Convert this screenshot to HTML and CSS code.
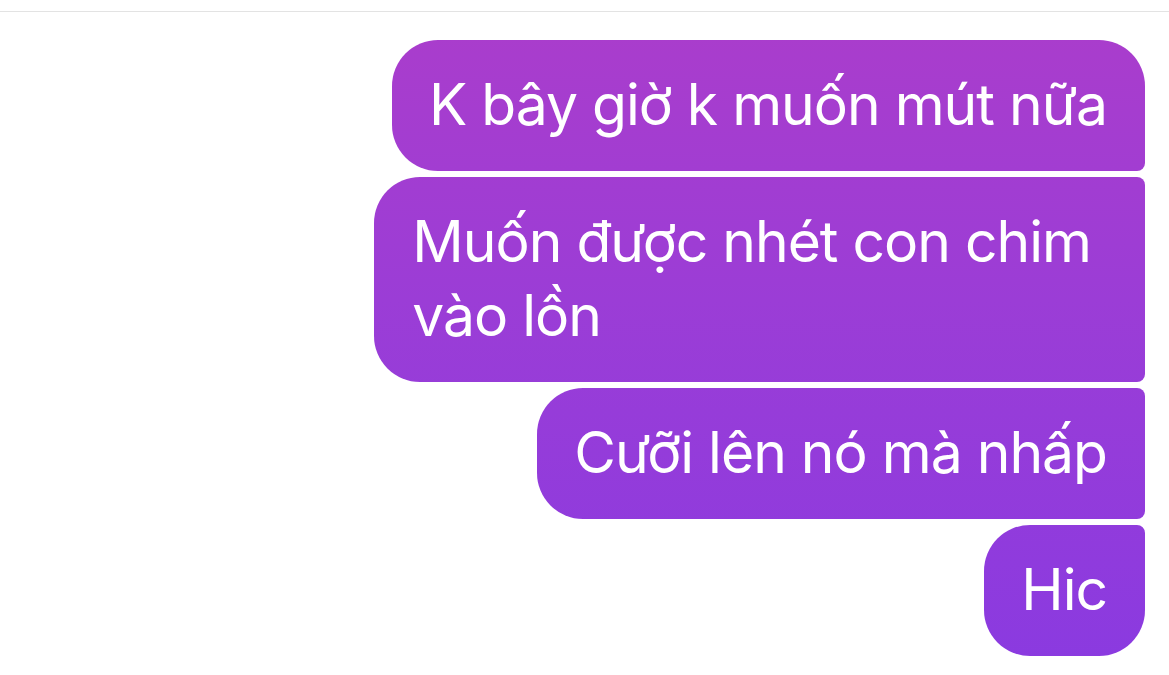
FILE: index.html
```html
<!DOCTYPE html>
<html lang="vi">
<head>
<meta charset="utf-8">
<title>Chat</title>
<link rel="stylesheet" href="styles.css">
</head>
<body>
<div class="topbar"></div>
<div class="thread">
  <div class="msg first">K bây giờ k muốn mút nữa</div>
  <div class="msg mid wrapped">Muốn được nhét con chim<br>vào lồn</div>
  <div class="msg mid">Cưỡi lên nó mà nhấp</div>
  <div class="msg last">Hic</div>
</div>
</body>
</html>
```
FILE: styles.css
```css
html, body {
  margin: 0;
  padding: 0;
  background: #ffffff;
}
body {
  width: 1169px;
  height: 675px;
  overflow: hidden;
  font-family: Inter, "Noto Sans", "Liberation Sans", sans-serif;
}
.topbar {
  height: 11px;
  border-bottom: 1px solid #e3e3e3;
}
.thread {
  display: flex;
  flex-direction: column;
  align-items: flex-end;
  gap: 6px;
  padding: 28px 24px 0 0;
}
.msg {
  color: #ffffff;
  font-size: 57px;
  line-height: 74px;
  letter-spacing: -1px;
  padding: 28px 38px 29px 37px;
  border-radius: 46px 8px 8px 46px;
  background: linear-gradient(180deg, #ab3dcb 0px, #9b3dd6 300px, #8a3ae0 675px) fixed;
  white-space: nowrap;
}
.msg.wrapped {
  padding-left: 38px;
  padding-right: 54px;
}
.msg.first {
  border-top-right-radius: 46px;
}
.msg.last {
  border-bottom-right-radius: 46px;
}
```
